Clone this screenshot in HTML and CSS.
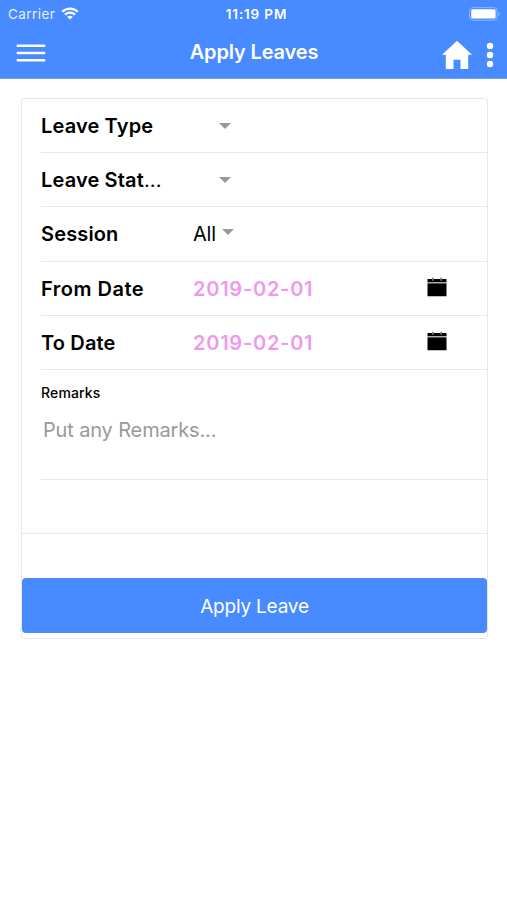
FILE: index.html
```html
<!DOCTYPE html>
<html lang="en">
<head>
<meta charset="utf-8">
<title>Apply Leaves</title>
<link rel="stylesheet" href="styles.css">
</head>
<body>
<header class="header">
  <div class="status">
    <div class="carrier"><span class="carrier-name">Carrier</span>
      <svg class="wifi" width="18" height="13" viewBox="0 0 18 13" fill="none" stroke="#fff" stroke-width="2.3"><path d="M1.2 4.8C5.5.5 12.5.5 16.8 4.8M4 7.7c2.8-2.7 7.2-2.7 10 0"/><path d="M9 12.5 6.2 9.8c1.6-1.4 4-1.4 5.6 0z" fill="#fff" stroke="none"/></svg>
    </div>
    <span class="time">11:19 PM</span>
    <svg class="battery" width="32" height="14" viewBox="0 0 32 14"><rect x=".6" y=".6" width="27.5" height="12.6" rx="3.2" fill="none" stroke="#8ab5ff"/><rect x="2.2" y="2.2" width="24.4" height="9.4" rx="1.6" fill="#fff"/><path d="M29.4 4.8c1.8.8 1.8 3.6 0 4.4z" fill="#8ab5ff"/></svg>
  </div>
  <nav class="toolbar">
    <svg class="menu" width="30" height="20" viewBox="0 0 30 20" stroke="#fff" stroke-width="2.5" stroke-linecap="round"><path d="M1.8 2.8h26.4M1.8 9.9h26.4M1.8 17.2h26.4"/></svg>
    <h1 class="title">Apply Leaves</h1>
    <div class="actions">
      <svg width="30" height="30" viewBox="0 0 30 30" fill="#fff"><path d="M15 .8 0 14.8h3.8V29h7.7V19.7h7V29h7.7V14.8H30z"/></svg>
      <svg width="8" height="26" viewBox="0 0 8 26" fill="#fff"><circle cx="4" cy="4" r="3.2"/><circle cx="4" cy="13" r="3.2"/><circle cx="4" cy="22" r="3.2"/></svg>
    </div>
  </nav>
</header>
<main class="card">
  <div class="row"><span class="label type">Leave Type</span><i class="caret empty"></i></div>
  <div class="row"><span class="label stat">Leave Stat<span class="dots">...</span></span><i class="caret empty"></i></div>
  <div class="row tall"><span class="label session">Session</span><span class="value">All</span><i class="caret"></i></div>
  <div class="row"><span class="label from">From Date</span><span class="date">2019-02-01</span>
    <svg class="calendar" width="20" height="20" viewBox="0 0 20 20"><path d="M.5 2H19.5V5.2H.5zM.5 6.3h19v12.9H.5z"/><path d="M.5 5.7h19" stroke="#aaa"/><path d="M5.8.8v3M14.2.8v3" stroke="#777" stroke-width="1.7"/></svg>
  </div>
  <div class="row"><span class="label to">To Date</span><span class="date">2019-02-01</span>
    <svg class="calendar" width="20" height="20" viewBox="0 0 20 20"><path d="M.5 2H19.5V5.2H.5zM.5 6.3h19v12.9H.5z"/><path d="M.5 5.7h19" stroke="#aaa"/><path d="M5.8.8v3M14.2.8v3" stroke="#777" stroke-width="1.7"/></svg>
  </div>
  <div class="remarks"><span class="remarks-label">Remarks</span><span class="placeholder">Put any Remarks...</span></div>
  <div class="spacer"></div>
  <button class="apply" type="button"><span>Apply Leave</span></button>
</main>
</body>
</html>
```
FILE: styles.css
```css
* { box-sizing: border-box; }
body { margin: 0; background: #fff; color: #000; font-family: Inter, "Liberation Sans", sans-serif; }
svg { display: block; flex: none; }
.header { height: 79px; background: #488aff; color: #fff; border-bottom: 1px solid #6b9ff8; }
.status { height: 27px; display: grid; grid-template-columns: 1fr auto 1fr; align-items: center; padding: 1px 6px 0 8px; }
.carrier { display: flex; align-items: center; gap: 6px; }
.carrier-name { font-size: 13.5px; line-height: 18px; letter-spacing: .45px; color: #e4eeff; }
.wifi { margin-top: -2px; }
.time { font-size: 13.5px; line-height: 18px; font-weight: 600; letter-spacing: .85px; margin-left: 4px; font-feature-settings: "calt" 0; }
.battery { justify-self: end; margin-top: -1px; }
.toolbar { height: 51px; display: grid; grid-template-columns: 1fr auto 1fr; align-items: center; padding: 0 13px 0 16px; }
.title { margin: -2px 2px 0 0; font-size: 20px; line-height: 26px; font-weight: 600; letter-spacing: -.15px; }
.actions { display: flex; align-items: center; justify-content: flex-end; gap: 14px; padding-top: 4px; }
.card { width: 467px; height: 541px; margin: 19px 0 0 21px; border: 1px solid #e8e8e8; border-radius: 3px; box-shadow: 0 0 1px #e8e8e8; }
.row { height: 54px; margin-left: 19px; border-bottom: 1px solid #e8e8e8; display: flex; align-items: center; }
.row.tall { height: 55px; }
.label { width: 152px; flex: none; font-size: 20px; font-weight: 600; line-height: 26px; white-space: nowrap; letter-spacing: .15px; }
.from { letter-spacing: .5px; }
.dots { font-weight: 400; }
.caret { border: solid transparent; border-width: 6px 6px 0; border-top-color: #999; margin-left: 6px; margin-bottom: 4px; }
.caret.empty { margin-left: 26px; margin-bottom: 0; }
.value { font-size: 20px; letter-spacing: -.2px; }
.date { font-size: 20px; font-weight: 600; letter-spacing: .75px; color: #ee99ee; }
.calendar { margin: 0 40px 3px auto; }
.remarks { height: 110px; margin-left: 19px; border-bottom: 1px solid #e8e8e8; display: flex; flex-direction: column; padding-top: 13px; }
.remarks-label { font-size: 14px; line-height: 20px; font-weight: 450; letter-spacing: .15px; }
.placeholder { font-size: 20px; line-height: 26px; letter-spacing: -.15px; color: #999; margin: 14px 0 0 2px; }
.spacer { height: 54px; border-bottom: 1px solid #e8e8e8; }
.apply { display: block; width: 100%; height: 55px; margin-top: 44px; padding: 2px 0 0; border: 0; border-radius: 4px; background: #488aff; color: #fff; font: 400 19px/26px Inter, "Liberation Sans", sans-serif; letter-spacing: -.2px; }
```
